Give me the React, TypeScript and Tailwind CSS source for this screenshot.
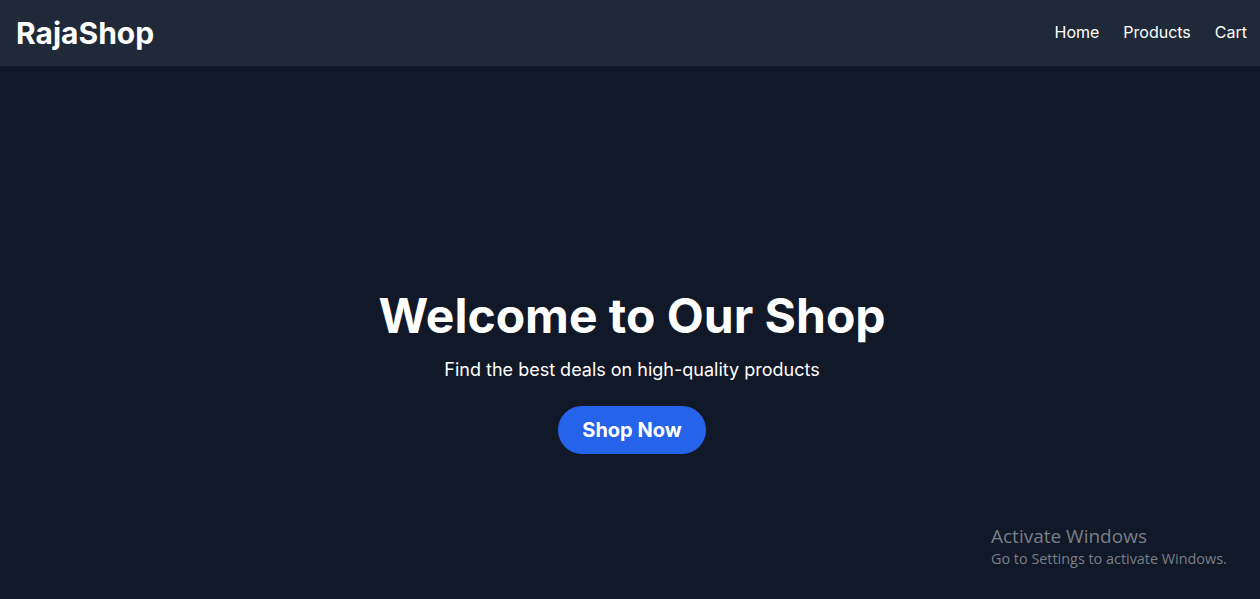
export default function App() {
  return (
    <div className="relative min-h-[599px] bg-[#111827] text-white" style={{ fontFamily: 'Inter, "Liberation Sans", sans-serif' }}>
      {/* Header */}
      <header className="flex h-[66px] items-center justify-between bg-[#1f2937] pl-4 pr-[13px]">
        <h1 className="text-[30px] font-bold">RajaShop</h1>
        <nav className="-mt-[2px] flex items-center gap-6 text-base">
          <a href="#">Home</a>
          <a href="#">Products</a>
          <a href="#">Cart</a>
        </nav>
      </header>

      {/* Hero */}
      <section className="flex flex-col items-center pl-1 pt-[226px] text-center">
        <h2 className="text-5xl leading-[48px] font-bold">Welcome to Our Shop</h2>
        <p className="mt-4 text-lg leading-7">Find the best deals on high-quality products</p>
        <button className="mt-[22px] h-12 rounded-full bg-[#2563eb] px-6 text-xl font-bold">Shop Now</button>
      </section>

      {/* Windows watermark */}
      <div
        className="pointer-events-none absolute left-[991px] top-[523px] text-[#7a7f88]"
        style={{ fontFamily: '"Open Sans", "Noto Sans", sans-serif' }}
      >
        <p className="text-[19px] leading-[26px]">Activate Windows</p>
        <p className="text-[14.4px] leading-[20px]">Go to Settings to activate Windows.</p>
      </div>
    </div>
  )
}
